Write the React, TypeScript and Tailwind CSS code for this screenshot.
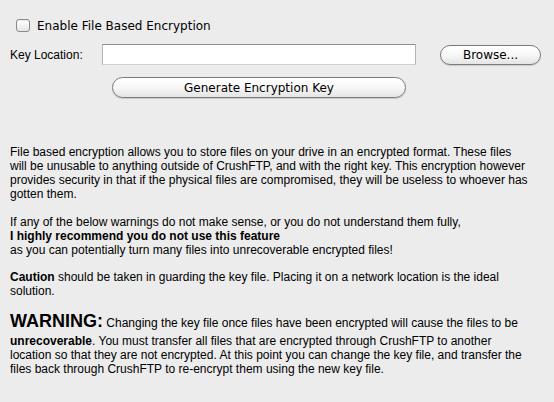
const aqua = "'DejaVu Sans', 'Lucida Grande', sans-serif";

function AquaButton({ label, className }: { label: string; className: string }) {
  return (
    <button
      type="button"
      className={`flex items-center justify-center rounded-full border border-[#7b7b7b] bg-gradient-to-b from-white via-[#f7f7f7] to-[#e4e4e4] text-[12px] text-black shadow-[0_1px_1px_rgba(0,0,0,0.15)] ${className}`}
      style={{ fontFamily: aqua }}
    >
      {label}
    </button>
  );
}

export default function App() {
  return (
    <div
      className="h-[402px] w-[554px] overflow-hidden bg-[#ececec] text-black"
      style={{ fontFamily: "'Liberation Sans', Arial, sans-serif" }}
    >
      {/* enable checkbox */}
      <div className="flex h-[13px] items-center gap-[7px] pl-[16px] pt-0 mt-[19px]">
        <span className="h-[13px] w-[14px] shrink-0 rounded-[3px] border border-[#8a8a8a] bg-gradient-to-b from-white to-[#e6e6e6] shadow-[inset_0_1px_1px_rgba(0,0,0,0.08)]" />
        <span className="whitespace-nowrap text-[12px] leading-none" style={{ fontFamily: aqua }}>
          Enable File Based Encryption
        </span>
      </div>

      {/* key location */}
      <div className="mt-[12px] flex h-[21px] items-center pl-[10px]">
        <span className="w-[92px] shrink-0 text-[12px]">Key Location:</span>
        <input
          type="text"
          className="h-[21px] w-[314px] border border-t-[#8e8e8e] border-x-[#b2b2b2] border-b-[#d0d0d0] bg-white px-1 text-[12px] outline-none"
        />
        <AquaButton label="Browse..." className="ml-[24px] h-[20px] w-[101px]" />
      </div>

      <div className="mt-[12px] pl-[112px]">
        <AquaButton label="Generate Encryption Key" className="h-[21px] w-[294px]" />
      </div>

      {/* info text */}
      <div className="mt-[47px] whitespace-nowrap pl-[10px] text-[12px] leading-[14px]">
        <p>
          File based encryption allows you to store files on your drive in an encrypted format. These files
          <br />
          will be unusable to anything outside of CrushFTP, and with the right key. This encryption however
          <br />
          provides security in that if the physical files are compromised, they will be useless to whoever has
          <br />
          gotten them.
        </p>
        <p className="mt-[14px]">
          If any of the below warnings do not make sense, or you do not understand them fully,
          <br />
          <b>I highly recommend you do not use this feature</b>
          <br />
          as you can potentially turn many files into unrecoverable encrypted files!
        </p>
        <p className="mt-[13px]">
          <b>Caution</b> should be taken in guarding the key file. Placing it on a network location is the ideal
          <br />
          solution.
        </p>
        <p className="mt-[12px]">
          <span className="block leading-[22px]">
            <b className="text-[18px]">WARNING:</b> Changing the key file once files have been encrypted will cause the files to be
          </span>
          <b>unrecoverable</b>. You must transfer all files that are encrypted through CrushFTP to another
          <br />
          location so that they are not encrypted. At this point you can change the key file, and transfer the
          <br />
          files back through CrushFTP to re-encrypt them using the new key file.
        </p>
      </div>
    </div>
  );
}
